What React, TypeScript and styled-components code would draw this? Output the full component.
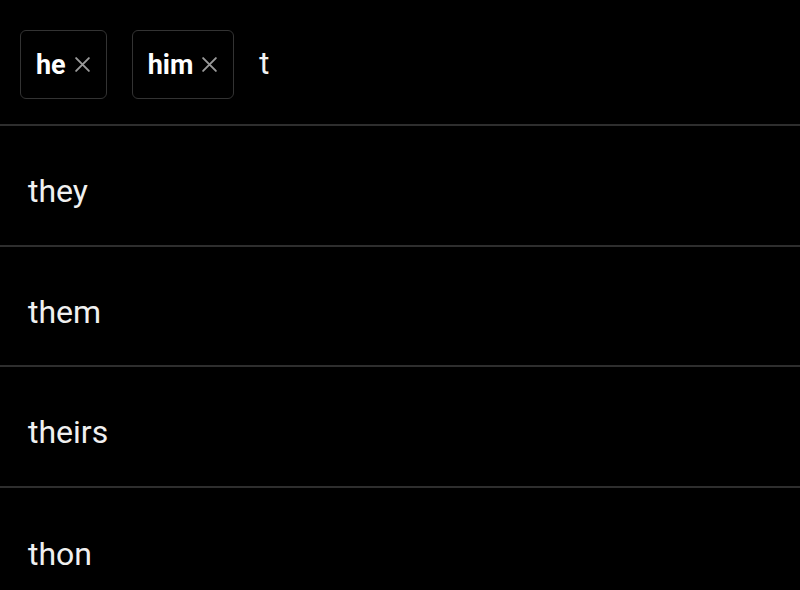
import React from 'react'
import styled, { createGlobalStyle } from 'styled-components'

const GlobalStyle = createGlobalStyle`
  html, body {
    margin: 0;
    padding: 0;
    background: #000;
  }
  body {
    font-family: Roboto, "Noto Sans", sans-serif;
    color: #f2f2f2;
  }
`

const Page = styled.div`
  width: 800px;
  height: 590px;
  overflow: hidden;
  background: #000;
`

const InputBar = styled.div`
  display: flex;
  align-items: center;
  gap: 25px;
  height: 126px;
  padding: 5px 20px 0;
  box-sizing: border-box;
  border-bottom: 2px solid #2e2e2e;
`

const Chip = styled.div`
  display: flex;
  align-items: center;
  gap: 8px;
  height: 69px;
  padding: 0 15px 0 15px;
  box-sizing: border-box;
  border: 1.5px solid #333;
  border-radius: 6px;
  font-size: 27px;
  font-weight: 700;
  color: #fff;
`

const Remove = styled.span`
  display: flex;
  color: #9a9a9a;
`

const Query = styled.span`
  font-size: 31px;
  color: #f2f2f2;
  margin-top: -2px;
`

const Row = styled.div`
  display: flex;
  align-items: center;
  height: 120.5px;
  box-sizing: border-box;
  padding: 12px 28px 0;
  border-bottom: 2px solid #2e2e2e;
  font-size: 32px;
  color: #f0f0f0;
  &:last-child {
    border-bottom: none;
  }
`

const Cross = () => (
  <svg width="17" height="17" viewBox="0 0 16 16">
    <path d="M2 2 L14 14 M14 2 L2 14" stroke="currentColor" strokeWidth="1.8" strokeLinecap="round" />
  </svg>
)

const chips = ['he', 'him']
const suggestions = ['they', 'them', 'theirs', 'thon']

export default function App() {
  return (
    <Page>
      <GlobalStyle />
      <InputBar>
        {chips.map((c) => (
          <Chip key={c}>
            {c}
            <Remove>
              <Cross />
            </Remove>
          </Chip>
        ))}
        <Query>t</Query>
      </InputBar>
      {suggestions.map((s) => (
        <Row key={s}>{s}</Row>
      ))}
    </Page>
  )
}
